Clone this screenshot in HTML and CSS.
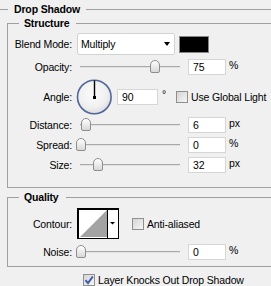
FILE: index.html
```html
<!DOCTYPE html>
<html lang="en">
<head>
<meta charset="UTF-8">
<title>Drop Shadow</title>
<link rel="stylesheet" href="styles.css">
</head>
<body>
<div class="dialog">
  <fieldset class="group outer">
    <legend>Drop Shadow</legend>

    <!-- Structure -->
    <fieldset class="group structure">
      <legend>Structure</legend>
      <div class="row blend-row">
        <span class="label">Blend Mode:</span>
        <div class="select"><span>Multiply</span><i class="caret"></i></div>
        <div class="swatch"></div>
      </div>
      <div class="row opacity-row">
        <span class="label">Opacity:</span>
        <div class="slider"><div class="thumb" style="left:74px"></div></div>
        <div class="field">75</div>
        <span class="unit">%</span>
      </div>
      <div class="row angle-row">
        <span class="label">Angle:</span>
        <svg class="dial" width="37" height="36" viewBox="0 0 37 36">
          <defs>
            <radialGradient id="dialFill" cx="45%" cy="40%" r="60%">
              <stop offset="0" stop-color="#fbfbfb"/>
              <stop offset="0.7" stop-color="#f0f0f0"/>
              <stop offset="1" stop-color="#dcdcdc"/>
            </radialGradient>
          </defs>
          <circle cx="18.3" cy="18" r="16.8" fill="url(#dialFill)" stroke="#52669a" stroke-width="1.6"/>
          <line x1="18.5" y1="1.5" x2="18.5" y2="19" stroke="#000" stroke-width="1.4"/>
          <rect x="17" y="17" width="3" height="3" fill="#000"/>
        </svg>
        <div class="field wide">90</div>
        <span class="unit deg">°</span>
        <label class="check"><span class="box"></span>Use Global Light</label>
      </div>
      <div class="row dist-row">
        <span class="label">Distance:</span>
        <div class="slider"><div class="thumb" style="left:5px"></div></div>
        <div class="field">6</div>
        <span class="unit">px</span>
      </div>
      <div class="row spread-row">
        <span class="label">Spread:</span>
        <div class="slider"><div class="thumb" style="left:0px"></div></div>
        <div class="field">0</div>
        <span class="unit">%</span>
      </div>
      <div class="row size-row">
        <span class="label">Size:</span>
        <div class="slider"><div class="thumb" style="left:17px"></div></div>
        <div class="field">32</div>
        <span class="unit">px</span>
      </div>
    </fieldset>

    <!-- Quality -->
    <fieldset class="group quality">
      <legend>Quality</legend>
      <div class="row contour-row">
        <span class="label">Contour:</span>
        <svg class="contour" width="42" height="31" viewBox="0 0 42 31">
          <rect x="0" y="0" width="42" height="31" fill="#000"/>
          <rect x="2" y="2" width="39" height="28" fill="#fff"/>
          <polygon points="3,29 30,29 30,2" fill="#a3a3a3"/>
          <rect x="30" y="2" width="1" height="28" fill="#000"/>
          <polygon points="33,14 38,14 35.5,16.5" fill="#000"/>
        </svg>
        <label class="check aa"><span class="box"></span>Anti-aliased</label>
      </div>
      <div class="row noise-row">
        <span class="label">Noise:</span>
        <div class="slider"><div class="thumb" style="left:0px"></div></div>
        <div class="field">0</div>
        <span class="unit">%</span>
      </div>
    </fieldset>

    <label class="check knockout">
      <span class="box">
        <svg width="10" height="10" viewBox="0 0 10 10"><path d="M1.5 5.2 L4 8.2 L8.8 1.5" fill="none" stroke="#3d5cae" stroke-width="2"/></svg>
      </span>Layer Knocks Out Drop Shadow
    </label>
  </fieldset>
</div>
</body>
</html>
```

FILE: styles.css
```css
body {
  margin: 0;
  background: #f0f0f0;
  color: #000;
  font-family: "Liberation Sans", Arial, sans-serif;
  font-size: 10.5px;
  letter-spacing: -0.15px;
  overflow: hidden;
}
.dialog {
  width: 271px;
  height: 286px;
  overflow: hidden;
}

/* group boxes */
.group {
  border: 1px solid #a0a0a0;
  margin: 0;
  padding: 0;
  min-width: 0;
}
.group legend {
  font-weight: bold;
  line-height: 13px;
  padding: 0 7px 0 5px;
  margin-left: 11px;
}
.outer {
  width: 300px;
  margin: 3px 0 0 -4px;
  padding: 0 0 0 11px;
  border-bottom: none;
}
.outer > legend {
  margin-left: 0;
  padding: 0 6px 0 6px;
}
.structure {
  width: 290px;
  margin: 1px 0 0 -1px;
  padding-bottom: 14px;
}
.quality {
  width: 290px;
  margin: 3px 0 0 -1px;
  padding-bottom: 6px;
}

/* rows */
.row {
  display: flex;
  align-items: center;
  height: 16px;
  margin-top: 4px;
}
.label {
  flex: none;
  width: 64px;
  margin-right: 4px;
  text-align: right;
}
.blend-row { height: 22px; margin-top: 3px; }
.angle-row { height: 36px; }
.dist-row { margin-top: 2px; }
.contour-row { height: 31px; margin-top: 4px; }
.noise-row { margin-top: 5px; }

/* blend mode */
.select {
  box-sizing: border-box;
  width: 98px;
  height: 22px;
  margin-left: 1px;
  padding: 0 4px 0 3px;
  background: #fff;
  border: 1px solid #d2d2d2;
  border-radius: 2px;
  display: flex;
  align-items: center;
  justify-content: space-between;
}
.caret {
  width: 0;
  height: 0;
  border-top: 4px solid #000;
  border-left: 3.5px solid transparent;
  border-right: 3.5px solid transparent;
}
.swatch {
  box-sizing: border-box;
  width: 30px;
  height: 17px;
  margin-left: 4px;
  background: #000;
  border: 1px solid #858585;
}

/* sliders */
.slider {
  position: relative;
  flex: none;
  width: 108px;
  height: 16px;
}
.slider::before {
  content: "";
  position: absolute;
  left: 4px;
  right: 4px;
  top: 7px;
  height: 1px;
  border-top: 1px solid #a8a8a8;
  background: #e2e2e2;
}
.thumb {
  position: absolute;
  top: 1px;
  box-sizing: border-box;
  width: 10px;
  height: 13px;
  border: 1px solid #8e8e8e;
  border-radius: 5px 5px 2px 2px;
  background: linear-gradient(#ffffff, #d8d8d8);
}

/* number fields */
.field {
  box-sizing: border-box;
  flex: none;
  width: 38px;
  height: 16px;
  margin-left: 4px;
  padding-left: 4px;
  line-height: 14px;
  background: #fff;
  border: 1px solid #d6d6d6;
}
.field.wide { width: 41px; }
.unit {
  margin-left: 3px;
  align-self: flex-start;
  line-height: 13px;
}
.deg {
  width: 14px;
  margin-left: 4px;
  align-self: center;
  margin-top: -6px;
}

/* dial and contour */
.dial {
  flex: none;
  margin-left: 0;
}
.contour {
  flex: none;
  margin-left: 1px;
}

/* checkboxes */
.check {
  display: flex;
  align-items: center;
}
.box {
  box-sizing: border-box;
  flex: none;
  width: 12px;
  height: 12px;
  margin-right: 3px;
  border: 1px solid #8f8f8f;
  background: linear-gradient(135deg, #d4d4d4, #f6f6f6);
  display: flex;
  align-items: center;
  justify-content: center;
}
.aa { margin-left: 13px; }
.knockout {
  margin: 7px 0 0 75px;
  height: 12px;
}
```
